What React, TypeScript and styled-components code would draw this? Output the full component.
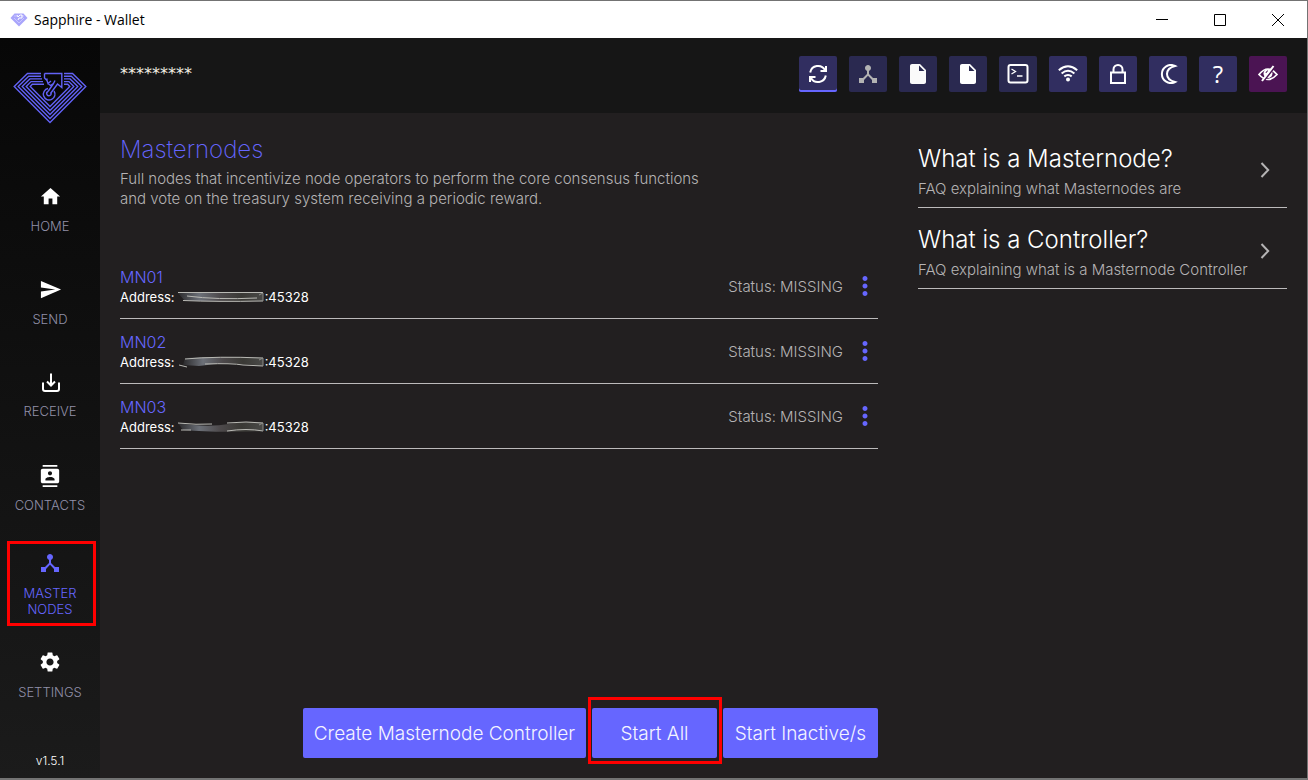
import React from "react";
import styled, { createGlobalStyle } from "styled-components";
import {
  MdHome,
  MdSend,
  MdContacts,
  MdDeviceHub,
  MdSettings,
  MdInsertDriveFile,
  MdMoreVert,
} from "react-icons/md";

const accent = "#6666ff";
const muted = "#b5b3b4";
const line = "#bcbabb";
const alert = "#ff0000";

const GlobalStyle = createGlobalStyle`
  *, *::before, *::after { box-sizing: border-box; }
  body {
    margin: 0;
    background: #221f20;
    font-family: Inter, "Open Sans", sans-serif;
    font-weight: 300;
  }
  button, input { font: inherit; }
  h1, h2, p, ul { margin: 0; padding: 0; font-weight: inherit; }
  li { list-style: none; }
`;

const Window = styled.div`
  display: flex;
  flex-direction: column;
  min-height: 100vh;
  border: solid #737373;
  border-width: 1px 1px 2px 0;
`;

const TitleBar = styled.header`
  display: flex;
  align-items: center;
  height: 37px;
  padding-left: 10px;
  background: #ffffff;
  color: #000000;
`;

const WindowTitle = styled.span`
  flex: 1;
  padding-left: 6px;
  font: 400 14px/20px "Open Sans", sans-serif;
`;

const WindowButton = styled.button`
  display: grid;
  place-items: center;
  width: 58px;
  height: 36px;
  padding: 0;
  border: 0;
  background: none;
`;

const Body = styled.div`
  display: flex;
  flex: 1;
`;

const Sidebar = styled.aside`
  display: flex;
  flex-direction: column;
  flex: none;
  width: 100px;
  background: linear-gradient(#070707, #1b1b1b);
`;

const Brand = styled.div`
  display: flex;
  justify-content: center;
  height: 126px;
  padding-top: 33px;
`;

const NavItem = styled.a<{ $active?: boolean }>`
  position: relative;
  display: flex;
  flex-direction: column;
  align-items: center;
  justify-content: center;
  gap: 10px;
  height: 93px;
  padding: ${(p) => (p.$active ? "2px 20px 0" : "0 10px 2px")};
  color: ${(p) => (p.$active ? accent : "#9190a8")};
  font-size: 13px;
  line-height: 16px;
  text-align: center;
  text-decoration: none;

  svg {
    flex: none;
    color: ${(p) => (p.$active ? accent : "#ffffff")};
  }
`;

const Marker = styled.span<{ $inset: string }>`
  position: absolute;
  inset: ${(p) => p.$inset};
  border: 3px solid ${alert};
  pointer-events: none;
`;

const Version = styled.p`
  margin-top: auto;
  padding-bottom: 9px;
  color: #ffffff;
  font-size: 12px;
  line-height: 16px;
  text-align: center;
`;

const Content = styled.div`
  display: flex;
  flex: 1;
  flex-direction: column;
  min-width: 0;
`;

const TopBar = styled.div`
  display: flex;
  align-items: center;
  justify-content: space-between;
  height: 75px;
  padding: 0 20px 4px;
  background: #161616;
`;

const Balance = styled.span`
  color: #f3efe2;
  font: 400 16px/20px "DejaVu Sans", sans-serif;
`;

const Tools = styled.div`
  display: flex;
  gap: 12px;
`;

const ToolButton = styled.button<{ $tone?: string; $selected?: boolean }>`
  display: grid;
  place-items: center;
  width: 38px;
  height: 36px;
  padding: 0;
  border: 0;
  border-radius: 2px;
  background: ${(p) => p.$tone ?? "#312e60"};
  box-shadow: ${(p) => (p.$selected ? `inset 0 -2px ${accent}` : "none")};
  color: #ffffff;
`;

const HelpMark = styled.span`
  font: 400 24px/24px "Open Sans", sans-serif;
`;

const Page = styled.div`
  display: grid;
  flex: 1;
  grid-template-columns: minmax(0, 1fr) 369px;
  gap: 40px;
  padding: 20px;
`;

const Main = styled.main`
  display: flex;
  flex-direction: column;
`;

const Heading = styled.h1`
  color: ${accent};
  font-size: 24px;
  line-height: 34px;
  font-weight: 200;
`;

const Intro = styled.p`
  margin-top: 2px;
  color: ${muted};
  font-size: 15px;
  line-height: 20px;
`;

const NodeList = styled.ul`
  margin-top: 45px;
`;

const NodeRow = styled.li`
  display: flex;
  align-items: center;
  height: 65px;
  border-bottom: 1px solid ${line};
`;

const NodeInfo = styled.div`
  flex: 1;
  padding-top: 2px;
`;

const NodeName = styled.h2`
  color: ${accent};
  font-size: 16px;
  line-height: 20px;
`;

const NodeAddress = styled.p`
  display: flex;
  align-items: center;
  color: #ffffff;
  font-size: 13px;
  line-height: 20px;
  font-weight: 400;

  svg { margin-left: 2px; }
`;

const Status = styled.span`
  padding-top: 2px;
  color: ${muted};
  font-size: 15px;
  line-height: 20px;
`;

const MenuButton = styled.button`
  display: grid;
  place-items: center;
  width: 28px;
  height: 32px;
  margin: 0 0 0 7px;
  padding: 0;
  border: 0;
  background: none;
  color: ${accent};
`;

const Actions = styled.div`
  display: flex;
  justify-content: flex-end;
  gap: 6px;
  margin-top: auto;
`;

const ActionButton = styled.button<{ $width: number }>`
  position: relative;
  width: ${(p) => p.$width}px;
  height: 50px;
  padding: 2px 10px 0;
  border: 0;
  border-radius: 2px;
  background: ${accent};
  color: #f4f4ff;
  font-size: 19px;
  line-height: 24px;
`;

const ActionLabel = styled.span`
  display: flex;
  justify-content: center;
  overflow: hidden;
  white-space: nowrap;
`;

const FaqLink = styled.a`
  display: flex;
  align-items: center;
  height: 81px;
  padding: 6px 17px 0 0;
  border-bottom: 1px solid ${line};
  color: ${muted};
  text-decoration: none;
`;

const FaqText = styled.div`
  flex: 1;
  padding-top: 6px;
  white-space: nowrap;
`;

const Faq = styled.aside`
  display: flex;
  flex-direction: column;
  margin-top: -6px;
`;

const FaqTitle = styled.h2`
  color: #ffffff;
  font-size: 24px;
  line-height: 32px;
`;

const FaqNote = styled.p`
  font-size: 15px;
  line-height: 28px;
`;

const Stroke = ({
  size = 20,
  width = 2,
  children,
}: {
  size?: number;
  width?: number;
  children: React.ReactNode;
}) => (
  <svg width={size} height={size} viewBox={`0 0 ${size} ${size}`} fill="none" stroke="currentColor" strokeWidth={width}>
    {children}
  </svg>
);

const Gem = () => (
  <svg width="18" height="14" viewBox="0 0 18 14">
    <path d="M4.500 0.500H13.500L17.500 5L9 13.500L0.500 5Z" fill="#a9a5fb" />
    <path d="M4 3H7M11 3H14M4 5L9 10L14 5" fill="none" stroke="#c9c6ff" />
    <path d="M7 2L8 4L10 2L12 2V5L9 5L8 7" fill="none" stroke="#ffffff" />
  </svg>
);

const Logo = () => (
  <svg width="74" height="54" viewBox="0 0 74 54" fill="none" stroke="#6262f6" strokeWidth="1.400">
    <path d="M28 2.500H14.500L1.200 15.500L37 51.500L72.800 15.500L59.500 2.500H51" />
    <path d="M28 5.200H15.700L5.200 15.500L37 47.500L68.800 15.500L58.300 5.200H51" />
    <path d="M29 7.900H16.900L9.200 15.500L37 43.500L64.800 15.500L57.100 7.900H51" />
    <path d="M30 10.600H18.100L13.200 15.500L37 39.500L60.800 15.500L55.900 10.600H51" />
    <path d="M31 13.300H19.300L17.200 15.500L37 35.500L56.800 15.500L54.700 13.300H51" />
    <path d="M31.500 2.500H48.800V16.500L44.500 13L37.500 22.500M31.500 2.500V7L34 9.500V7.500M34 9.500L35 12.500L38 10M35 12.500L37.500 14.500L40.500 12.500L42 9.500M40.500 12.500L35 20.500" />
    <path d="M35 17.500A5.800 5.800 0 1 0 41 20M35 20.500A2.200 2.200 0 1 0 38 22" />
  </svg>
);

const ReceiveIcon = () => (
  <Stroke>
    <path d="M2 9.500V16a2 2 0 0 0 2 2H16a2 2 0 0 0 2-2V9.500M10 0.500V12M6 8.500L10 12.500L14 8.500" transform="translate(1 0)" />
  </Stroke>
);

const SyncIcon = () => (
  <Stroke>
    <path d="M2.200 8.500A8 8 0 0 1 17 6M17.800 11.500A8 8 0 0 1 3 14" />
    <path d="M18 2V7H12.500M2 18V13H7.500" />
  </Stroke>
);

const TerminalIcon = () => (
  <Stroke size={22}>
    <rect x="1.500" y="2" width="19" height="17.500" rx="2" />
    <path d="M4.500 6L8.500 8.500L4.500 11M10 13H15.500" strokeWidth="1.300" />
  </Stroke>
);

const WifiIcon = () => (
  <Stroke>
    <path d="M0.800 6.200Q10 -1.600 19.200 6.200M3.600 9.500Q10 4 16.400 9.500M6.300 12.400Q10 9.500 13.700 12.400" />
    <circle cx="10" cy="15.500" r="2" fill="currentColor" stroke="none" />
  </Stroke>
);

const LockIcon = () => (
  <Stroke>
    <path d="M3 8.500H17V19H3ZM5.500 8.500V5.500A4.500 4.500 0 0 1 14.500 5.500V8.500" />
  </Stroke>
);

const MoonIcon = () => (
  <Stroke>
    <path d="M17 2A9 9 0 1 0 17 18Q9 16 9 10Q9 4 17 2Z" />
  </Stroke>
);

const HiddenIcon = () => (
  <Stroke>
    <path d="M1 10.500Q10 -0.500 19 10.500Q10 20.500 1 10.500Z" strokeWidth="1.700" />
    <circle cx="10" cy="9.500" r="4.500" fill="currentColor" stroke="none" />
    <path d="M8 9A2.500 2.500 0 0 1 10 6.800" stroke="#4b1453" strokeWidth="1" />
    <path d="M16.800 3L4.800 18" stroke="#4b1453" strokeWidth="2" />
    <path d="M15.500 2L4 17" />
  </Stroke>
);

const Chevron = () => (
  <svg width="10" height="16" viewBox="0 0 10 16" fill="none" stroke="currentColor" strokeWidth="2">
    <path d="M1.500 1L8.200 8L1.500 15" />
  </svg>
);

const smears = [
  ["M1 2Q30 0 86 2V10H8Z", "M1 1.500H86M6 9.500Q40 11 86 10M10 5Q40 9 80 7"],
  ["M8 2Q50 0 86 2V10Q50 5 22 10L6 9Z", "M8 3Q40 0 86 2M2 9L10 11M28 8Q55 7 66 9L86 10"],
  ["M1 2Q30 7 52 3T86 2V10Q40 12 6 9Z", "M1 2Q20 4 35 3M50 2Q70 0 86 2M4 9H14M50 10Q70 7 86 10"],
];

const Smear = ({ index }: { index: number }) => (
  <svg width="88" height="12" viewBox="0 0 88 12" fill="none">
    <defs>
      <linearGradient id={`smear${index}`}>
        <stop offset="0" stopColor="#2b2a2c" />
        <stop offset="0.250" stopColor="#6c7078" />
        <stop offset="0.500" stopColor="#4d494b" />
        <stop offset="0.750" stopColor="#3a3935" />
        <stop offset="1" stopColor="#4a4a48" />
      </linearGradient>
    </defs>
    <path d={smears[index][0]} fill={`url(#smear${index})`} />
    <path d={smears[index][1]} stroke="#b9b9b4" />
    <path d="M82 4L86 2V10" stroke="#8b8b86" />
  </svg>
);

const navigation = [
  { label: "HOME", icon: <MdHome size={23} /> },
  { label: "SEND", icon: <MdSend size={23} /> },
  { label: "RECEIVE", icon: <ReceiveIcon /> },
  { label: "CONTACTS", icon: <MdContacts size={22} /> },
  { label: "MASTER NODES", icon: <MdDeviceHub size={24} />, active: true },
  { label: "SETTINGS", icon: <MdSettings size={24} /> },
];

const tools = [
  { label: "Sync", icon: <SyncIcon />, selected: true },
  { label: "Masternodes", icon: <MdDeviceHub size={24} color="#b3b3b3" />, tone: "#2a2950" },
  { label: "Configuration file", icon: <MdInsertDriveFile size={24} color="#fafafa" />, tone: "#2a2950" },
  { label: "Masternode file", icon: <MdInsertDriveFile size={24} />, tone: "#2a2950" },
  { label: "Console", icon: <TerminalIcon />, tone: "#2a2950" },
  { label: "Network", icon: <WifiIcon /> },
  { label: "Lock wallet", icon: <LockIcon /> },
  { label: "Dark mode", icon: <MoonIcon /> },
  { label: "Help", icon: <HelpMark>?</HelpMark> },
  { label: "Hide balance", icon: <HiddenIcon />, tone: "#4b1453" },
];

const nodes = ["MN01", "MN02", "MN03"];

const questions = [
  { title: "What is a Masternode?", note: "FAQ explaining what Masternodes are" },
  { title: "What is a Controller?", note: "FAQ explaining what is a Masternode Controller" },
];

export default function App() {
  return (
    <>
      <GlobalStyle />
      <Window>
        <TitleBar>
          <Gem />
          <WindowTitle>Sapphire - Wallet</WindowTitle>
          <WindowButton aria-label="Minimize">
            <Stroke size={12} width={1}><path d="M0 5.500H12" /></Stroke>
          </WindowButton>
          <WindowButton aria-label="Maximize">
            <Stroke size={12} width={1}><path d="M0.500 0.500H11.500V11.500H0.500Z" /></Stroke>
          </WindowButton>
          <WindowButton aria-label="Close">
            <Stroke size={12} width={1}><path d="M0 0L12 12M12 0L0 12" /></Stroke>
          </WindowButton>
        </TitleBar>
        <Body>
          <Sidebar>
            <Brand><Logo /></Brand>
            <nav>
              {navigation.map((item) => (
                <NavItem key={item.label} href="#" $active={item.active}>
                  {item.icon}
                  {item.label}
                  {item.active && <Marker $inset="5px 4px 3px 7px" />}
                </NavItem>
              ))}
            </nav>
            <Version>v1.5.1</Version>
          </Sidebar>
          <Content>
            <TopBar>
              <Balance>*********</Balance>
              <Tools>
                {tools.map((tool) => (
                  <ToolButton key={tool.label} aria-label={tool.label} $tone={tool.tone} $selected={tool.selected}>
                    {tool.icon}
                  </ToolButton>
                ))}
              </Tools>
            </TopBar>
            <Page>
              <Main>
                <Heading>Masternodes</Heading>
                <Intro>
                  Full nodes that incentivize node operators to perform the core consensus functions
                  <br />
                  and vote on the treasury system receiving a periodic reward.
                </Intro>
                <NodeList>
                  {nodes.map((name, index) => (
                    <NodeRow key={name}>
                      <NodeInfo>
                        <NodeName>{name}</NodeName>
                        <NodeAddress>
                          Address: <Smear index={index} />:45328
                        </NodeAddress>
                      </NodeInfo>
                      <Status>Status: MISSING</Status>
                      <MenuButton aria-label={`${name} menu`}><MdMoreVert size={30} /></MenuButton>
                    </NodeRow>
                  ))}
                </NodeList>
                <Actions>
                  <ActionButton $width={283}><ActionLabel>Create Masternode Controller</ActionLabel></ActionButton>
                  <ActionButton $width={125}>
                    <ActionLabel>Start All</ActionLabel>
                    <Marker $inset="-11px -5px -6px -4px" />
                  </ActionButton>
                  <ActionButton $width={155}><ActionLabel>Start Inactive/s</ActionLabel></ActionButton>
                </Actions>
              </Main>
              <Faq>
                {questions.map((question) => (
                  <FaqLink key={question.title} href="#">
                    <FaqText>
                      <FaqTitle>{question.title}</FaqTitle>
                      <FaqNote>{question.note}</FaqNote>
                    </FaqText>
                    <Chevron />
                  </FaqLink>
                ))}
              </Faq>
            </Page>
          </Content>
        </Body>
      </Window>
    </>
  );
}
